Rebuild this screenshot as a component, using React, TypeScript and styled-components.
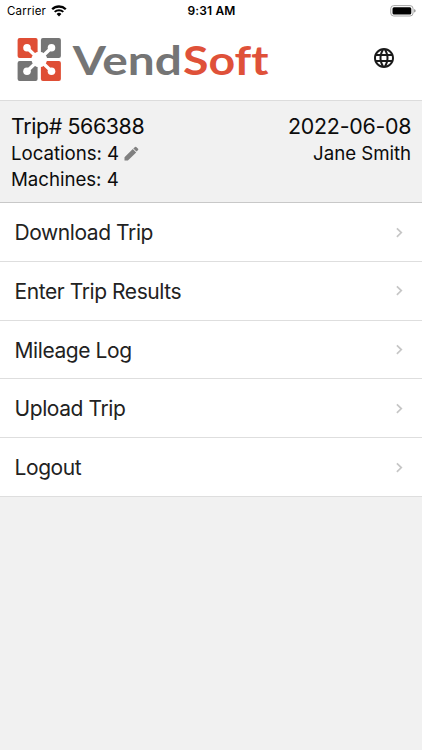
import React from "react";
import styled, { createGlobalStyle } from "styled-components";
import { MdLanguage } from "react-icons/md";

const GlobalStyle = createGlobalStyle`
  * { box-sizing: border-box; }
  body { margin: 0; background: #f1f1f1; font-family: Inter, "Liberation Sans", sans-serif; }
`;

const Screen = styled.div`
  display: flex;
  flex-direction: column;
  min-height: 750px;
  background: #f1f1f1;
  color: #0c0c0c;
`;

const StatusBar = styled.div`
  display: grid;
  grid-template-columns: 1fr auto 1fr;
  align-items: center;
  height: 22px;
  padding: 0 6px 0 7px;
  background: #fff;
  color: #000;
  font-size: 11.5px;
  line-height: 22px;
`;

const Carrier = styled.div`
  display: flex;
  align-items: center;
  gap: 5px;
  letter-spacing: 0.2px;
`;

const Clock = styled.div`
  font-weight: 600;
  font-size: 12px;
  letter-spacing: 0.15px;
`;

const BatteryIcon = styled.svg`
  justify-self: end;
`;

const Header = styled.header`
  display: flex;
  align-items: center;
  justify-content: space-between;
  height: 79px;
  padding: 0 26px 6px 16px;
  background: #fff;
  border-bottom: 1px solid #dcdcdc;
`;

const Wordmark = styled.g`
  font-family: Lato, sans-serif;
  font-size: 40.8px;
  font-weight: 700;
  font-variant-ligatures: none;
`;

const Language = styled(MdLanguage)`
  width: 24px;
  height: 24px;
  color: #1a1a1a;
`;

const Summary = styled.section`
  display: flex;
  justify-content: space-between;
  height: 102px;
  padding: 11px 11px 0;
  border-bottom: 1px solid #c8c8c8;
`;

const Column = styled.div<{ $end?: boolean }>`
  display: flex;
  flex-direction: column;
  align-items: ${(p) => (p.$end ? "flex-end" : "flex-start")};
`;

const Title = styled.div<{ $track: number }>`
  height: 29px;
  font-size: 21.4px;
  line-height: 28px;
  letter-spacing: ${(p) => p.$track}px;
  margin-right: ${(p) => p.$track}px;
`;

const Detail = styled.div<{ $track: number }>`
  display: flex;
  align-items: center;
  gap: 5px;
  height: 26px;
  font-size: 18.7px;
  line-height: 26px;
  letter-spacing: ${(p) => p.$track}px;
`;

const Menu = styled.nav`
  display: flex;
  flex-direction: column;
`;

const Item = styled.a`
  display: flex;
  align-items: center;
  justify-content: space-between;
  height: 58.75px;
  padding: 1.5px 18px 0 14.5px;
  background: #fff;
  border-bottom: 1px solid #dedede;
  color: #222;
  font-size: 21px;
  letter-spacing: -0.42px;
`;

const items = ["Download Trip", "Enter Trip Results", "Mileage Log", "Upload Trip", "Logout"];

const Wifi = () => (
  <svg width="16" height="12" viewBox="0 0 16 12" fill="none" stroke="#000">
    <path d="M1.2 4.3a9.7 9.7 0 0 1 13.6 0" strokeWidth="2.3" />
    <path d="M3.7 6.9a6.1 6.1 0 0 1 8.6 0" strokeWidth="2" />
    <path d="M5.6 9a3.4 3.4 0 0 1 4.8 0L8 11.4z" fill="#000" stroke="none" />
  </svg>
);

const Battery = () => (
  <BatteryIcon width="26" height="12" viewBox="0 0 26 12">
    <rect x=".75" y=".6" width="22.3" height="10.4" rx="3" fill="#fff" stroke="#a5a5a5" />
    <rect x="2.5" y="2.2" width="18.8" height="7.2" rx="1.5" />
    <path d="M24.2 4q1.4.4 1.4 1.8t-1.4 1.8z" fill="#888" />
  </BatteryIcon>
);

const Pencil = () => (
  <svg width="15" height="16" viewBox="0 0 15 16" fill="#808080">
    <path d="M.5 14.6v-3.4l8.3-8.1 3.4 3.4-8.3 8.1zM9.3 2.6 11 1q.6-.5 1.2 0l1.9 1.8q.5.6 0 1.2l-1.6 1.6z" />
  </svg>
);

const Logo = () => (
  <svg width="256" height="54" viewBox="16 31 256 54" role="img" aria-label="VendSoft">
    <g fill="#df4e35">
      <rect x="17.6" y="38" width="20" height="20" rx="2" />
      <rect x="40.9" y="60.9" width="20" height="20" rx="2" />
    </g>
    <g fill="#757575">
      <rect x="40.9" y="38" width="20" height="20" rx="2" />
      <rect x="17.6" y="60.9" width="20" height="20" rx="2" />
    </g>
    <g fill="#fff" stroke="#fff">
      <path d="M27 47.8 51.5 71.2M51.5 47.8 27 71.2" strokeWidth="3.4" />
      <circle cx="27" cy="47.8" r="3.8" stroke="none" />
      <circle cx="51.5" cy="47.8" r="3.8" stroke="none" />
      <circle cx="27" cy="71.2" r="3.8" stroke="none" />
      <circle cx="51.5" cy="71.2" r="3.8" stroke="none" />
      <circle cx="39.25" cy="59.5" r="7.8" stroke="none" />
    </g>
    <Wordmark>
      <text x="72.8" y="75" textLength="109" lengthAdjust="spacingAndGlyphs" fill="#757575">Vend</text>
      <text x="183" y="75" textLength="85.5" lengthAdjust="spacingAndGlyphs" fill="#df5139">Soft</text>
    </Wordmark>
  </svg>
);

const Chevron = () => (
  <svg width="10" height="12" viewBox="0 0 10 12" fill="none" stroke="#c6c6c6" strokeWidth="1.7">
    <path d="m2.9 1.3 4.4 4.3-4.4 4.3" />
  </svg>
);

export default function App() {
  return (
    <>
      <GlobalStyle />
      <Screen>
        <StatusBar>
          <Carrier>Carrier<Wifi /></Carrier>
          <Clock>9:31 AM</Clock>
          <Battery />
        </StatusBar>
        <Header>
          <Logo />
          <Language />
        </Header>
        <Summary>
          <Column>
            <Title $track={-0.4}>Trip# 566388</Title>
            <Detail $track={-0.04}>Locations: 4<Pencil /></Detail>
            <Detail $track={-0.04}>Machines: 4</Detail>
          </Column>
          <Column $end>
            <Title $track={-0.26}>2022-06-08</Title>
            <Detail $track={-0.05}>Jane Smith</Detail>
          </Column>
        </Summary>
        <Menu>
          {items.map((label) => (
            <Item key={label}>
              {label}
              <Chevron />
            </Item>
          ))}
        </Menu>
      </Screen>
    </>
  );
}
